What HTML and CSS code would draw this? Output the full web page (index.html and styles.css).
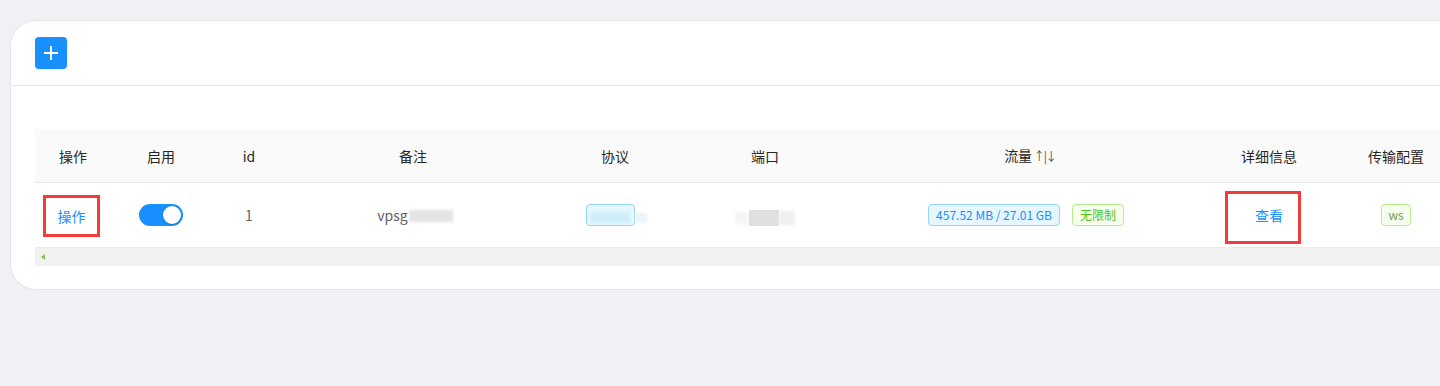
FILE: index.html
```html
<!DOCTYPE html>
<html lang="zh-CN">
<head>
<meta charset="utf-8">
<title>入站列表</title>
<link rel="stylesheet" href="styles.css">
</head>
<body>
<div class="page">
  <div class="card">
    <div class="card-head">
      <button class="add-btn" aria-label="添加">
        <svg width="14" height="14" viewBox="0 0 14 14"><path d="M7 0v14M0 7h14" stroke="#fff" stroke-width="2"/></svg>
      </button>
    </div>
    <div class="card-body">
      <div class="table">
        <div class="thead">
          <div class="th">操作</div>
          <div class="th">启用</div>
          <div class="th">id</div>
          <div class="th">备注</div>
          <div class="th">协议</div>
          <div class="th">端口</div>
          <div class="th">流量<span class="sort">↑|↓</span></div>
          <div class="th">详细信息</div>
          <div class="th">传输配置</div>
        </div>
        <div class="trow">
          <div class="td"><span class="mark mark-op"><a class="link">操作</a></span></div>
          <div class="td"><span class="switch"><span class="knob"></span></span></div>
          <div class="td num">1</div>
          <div class="td remark">vpsg<span class="blur blur-remark"></span></div>
          <div class="td"><span class="proto"><span class="tag tag-blue tag-proto"><span class="blur blur-proto"></span></span><span class="blur blur-proto-tail"></span></span></div>
          <div class="td"><span class="port"><span class="blur blur-port-a"></span><span class="blur blur-port-b"></span><span class="blur blur-port-c"></span></span></div>
          <div class="td traffic"><span class="tag tag-blue">457.52 MB / 27.01 GB</span><span class="tag tag-green">无限制</span></div>
          <div class="td"><span class="mark mark-view"><a class="link">查看</a></span></div>
          <div class="td"><span class="tag tag-green tag-ws">ws</span></div>
        </div>
        <div class="hscroll"><span class="arrow"></span></div>
      </div>
    </div>
  </div>
</div>
</body>
</html>
```

FILE: styles.css
```css
html, body {
  margin: 0;
  padding: 0;
  background: #f0f1f5;
  overflow: hidden;
  font-family: "Noto Sans CJK SC", "Noto Sans", sans-serif;
  font-size: 14px;
  color: #333;
}

.page {
  padding: 20px 0 0 10px;
  width: 1500px;
}

.card {
  background: #fff;
  border: 1px solid #e4e5e8;
  border-radius: 26px;
  width: 1480px;
}

.card-head {
  height: 65px;
  border-bottom: 1px solid #e6e6e6;
  padding: 16px 24px 0 24px;
  box-sizing: border-box;
}

.add-btn {
  width: 32px;
  height: 32px;
  border: 0;
  border-radius: 4px;
  background: #1890ff;
  display: flex;
  align-items: center;
  justify-content: center;
  padding: 0;
  box-shadow: 0 1px 2px rgba(0,0,0,0.06);
}

.card-body {
  padding: 43px 0 23px 24px;
}

.table {
  width: 1440px;
}

.thead, .trow {
  display: grid;
  grid-template-columns: 76px 100px 76px 252px 152px 148px 382px 96px 158px;
}

.thead {
  height: 53px;
  background: #fafafa;
  border-bottom: 1px solid #e8e8e8;
  align-items: center;
}

.th {
  text-align: center;
  color: #262626;
  line-height: 20px;
}

.sort {
  font-size: 12px;
  letter-spacing: -1.5px;
  color: #555;
  margin-left: 1px;
}

.trow {
  height: 64px;
  border-bottom: 1px solid #ececec;
  align-items: center;
}

.td {
  display: flex;
  justify-content: center;
  align-items: center;
  line-height: 20px;
  color: #606266;
}

.link {
  color: #1890ff;
  cursor: pointer;
}

.mark {
  border: 3px solid #f23b3b;
  box-sizing: border-box;
  display: flex;
  justify-content: center;
  align-items: center;
}

.mark-op {
  width: 57px;
  height: 42px;
  margin-left: -3px;
  margin-top: 2px;
}

.mark-view {
  width: 76px;
  height: 53px;
  margin-left: -12px;
  margin-top: 5px;
}

.mark-view .link {
  margin-left: 12px;
  margin-top: -5px;
}

.switch {
  width: 44px;
  height: 22px;
  border-radius: 11px;
  background: #1890ff;
  display: flex;
  justify-content: flex-end;
  align-items: center;
  padding: 0 2px;
  box-sizing: border-box;
}

.knob {
  width: 18px;
  height: 18px;
  border-radius: 50%;
  background: #fff;
  box-shadow: 0 1px 2px rgba(0,35,11,0.2);
}

.remark {
  padding-left: 4px;
}

.blur {
  display: inline-block;
  background: #e6e6e6;
  filter: blur(1.5px);
}

.blur-remark {
  width: 44px;
  height: 12px;
  margin-left: 1px;
  margin-top: 2px;
  background: #e3e3e3;
}

.proto {
  display: flex;
  align-items: center;
  margin-left: 2px;
}

.tag {
  display: inline-flex;
  align-items: center;
  height: 22px;
  box-sizing: border-box;
  padding: 0 7px;
  font-size: 12px;
  border-radius: 4px;
  border: 1px solid;
  line-height: 20px;
}

.tag-blue {
  background: #e6f7ff;
  border-color: #91d5ff;
  color: #1890ff;
}

.tag-green {
  background: #f6ffed;
  border-color: #b7eb8f;
  color: #52c41a;
}

.tag-proto {
  width: 49px;
  padding: 0;
  justify-content: center;
  align-items: flex-end;
  padding-bottom: 2px;
}

.blur-proto {
  width: 40px;
  height: 11px;
  background: #cfeefc;
}

.blur-proto-tail {
  width: 12px;
  height: 10px;
  background: #eef4f8;
  margin-top: 6px;
}

.port {
  display: flex;
  align-items: center;
  margin-top: 6px;
}

.blur-port-a {
  width: 14px;
  height: 12px;
  background: #f5f5f5;
}

.blur-port-b {
  width: 30px;
  height: 16px;
  background: #dfe0df;
  filter: blur(0.5px);
}

.blur-port-c {
  width: 16px;
  height: 14px;
  background: #efefef;
}

.traffic {
  gap: 12px;
  padding-right: 8px;
}

.tag-ws {
  width: 30px;
  padding: 0;
  justify-content: center;
  color: #7a9a4a;
}

.hscroll {
  height: 18px;
  background: #f1f1f1;
  position: relative;
}

.arrow {
  position: absolute;
  left: 6px;
  top: 6px;
  width: 0;
  height: 0;
  border-top: 3px solid transparent;
  border-bottom: 3px solid transparent;
  border-right: 4px solid #7cc35a;
}
```
